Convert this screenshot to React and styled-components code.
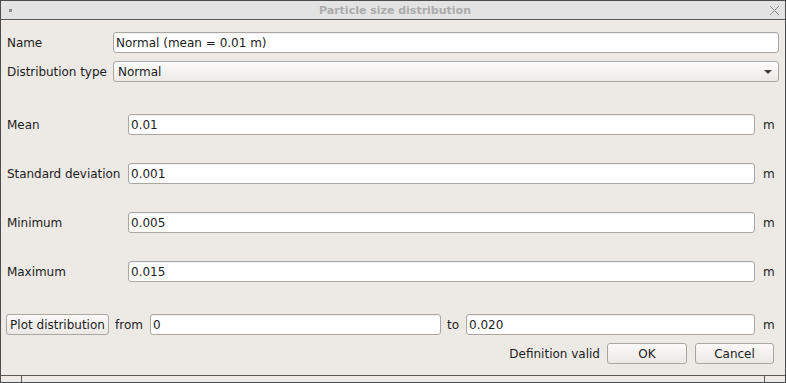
import React from "react";
import styled, { createGlobalStyle } from "styled-components";

const GlobalStyle = createGlobalStyle`
  html, body {
    margin: 0;
    padding: 0;
    background: #edeae6;
  }
  * {
    box-sizing: border-box;
  }
`;

const Dialog = styled.div`
  width: 786px;
  height: 383px;
  display: flex;
  flex-direction: column;
  border: 1px solid #4c4c4c;
  background: #edeae6;
  font-family: "DejaVu Sans", "Liberation Sans", sans-serif;
  font-size: 12px;
  color: #1c1c1c;
`;

const TitleBar = styled.div`
  height: 19px;
  flex: none;
  display: flex;
  align-items: center;
  position: relative;
  background: #e3e3e3;
  border-bottom: 1px solid #5a5a5a;
`;

const MenuDot = styled.span`
  position: absolute;
  left: 8px;
  top: 8px;
  width: 3px;
  height: 3px;
  background: #8c8c8c;
`;

const Title = styled.div`
  flex: 1;
  text-align: center;
  font-weight: bold;
  font-size: 11px;
  color: #ababab;
  padding-left: 4px;
`;

const CloseBtn = styled.svg`
  position: absolute;
  right: 5px;
  top: 4px;
`;

const Body = styled.div`
  flex: 1;
  display: flex;
  flex-direction: column;
  padding: 12px 6px 0 5px;
`;

const TopGrid = styled.div`
  display: grid;
  grid-template-columns: 107px 1fr;
  grid-auto-rows: 21px;
  row-gap: 8px;
`;

const ParamGrid = styled.div`
  display: grid;
  grid-template-columns: 122px 1fr 24px;
  grid-auto-rows: 21px;
  row-gap: 28px;
  margin-top: 32px;
`;

const Label = styled.span`
  display: flex;
  align-items: center;
  padding-left: 1px;
  white-space: nowrap;
  letter-spacing: -0.05px;
`;

const Unit = styled.span`
  display: flex;
  align-items: center;
  padding-left: 8px;
`;

const Connector = styled.span`
  width: ${(p) => p.$w}px;
  flex: none;
  padding-left: 6px;
`;

const Field = styled.input`
  height: 21px;
  width: ${(p) => (p.$w ? p.$w + "px" : "100%")};
  flex: ${(p) => (p.$w ? "none" : "1")};
  min-width: 0;
  border: 1px solid #aaa7a2;
  border-radius: 3px;
  background: #ffffff;
  box-shadow: inset 0 1px 1px rgba(0, 0, 0, 0.06);
  padding: 0 2px;
  font: inherit;
  color: #1c1c1c;
  outline: none;
`;

const Combo = styled.div`
  height: 21px;
  display: flex;
  align-items: center;
  justify-content: space-between;
  border: 1px solid #aaa7a2;
  border-radius: 3px;
  background: linear-gradient(#fdfdfd, #ece9e5);
  padding: 0 6px 0 4px;
`;

const Arrow = styled.span`
  width: 0;
  height: 0;
  border-left: 4px solid transparent;
  border-right: 4px solid transparent;
  border-top: 4px solid #3e3e3e;
`;

const PlotRow = styled.div`
  display: flex;
  align-items: center;
  height: 21px;
  margin-top: 32px;
`;

const Button = styled.button`
  height: 21px;
  width: ${(p) => p.$w}px;
  flex: none;
  border: 1px solid #aaa7a2;
  border-radius: 3px;
  background: linear-gradient(#fbfaf9, #ebe8e4);
  font: inherit;
  color: #1c1c1c;
  padding: 0;
`;

const Footer = styled.div`
  display: flex;
  align-items: center;
  justify-content: flex-end;
  height: 21px;
  margin-top: 8px;
  padding-right: 5px;
  gap: 7px;
`;

const Buttons = styled.div`
  display: flex;
  gap: 8px;
`;

const StatusStrip = styled.div`
  height: 7px;
  flex: none;
  border-top: 1px solid #5a5a5a;
  display: grid;
  grid-template-columns: 20px 1fr 21px;
`;

const StripCell = styled.div`
  border-left: ${(p) => (p.$line ? "1px solid #5a5a5a" : "none")};
`;

const params = [
  ["Mean", "0.01"],
  ["Standard deviation", "0.001"],
  ["Minimum", "0.005"],
  ["Maximum", "0.015"],
];

const App = () => {
  return (
    <>
      <GlobalStyle />
      <Dialog>
        <TitleBar>
          <MenuDot />
          <Title>Particle size distribution</Title>
          <CloseBtn width="11" height="11" viewBox="0 0 11 11">
            <path d="M1 1 L10 10 M10 1 L1 10" stroke="#8a8a8a" strokeWidth="1" fill="none" />
          </CloseBtn>
        </TitleBar>

        <Body>
          <TopGrid>
            <Label>Name</Label>
            <Field defaultValue="Normal (mean = 0.01 m)" />
            <Label>Distribution type</Label>
            <Combo>
              <span>Normal</span>
              <Arrow />
            </Combo>
          </TopGrid>

          <ParamGrid>
            {params.map(([name, val]) => (
              <React.Fragment key={name}>
                <Label>{name}</Label>
                <Field defaultValue={val} />
                <Unit>m</Unit>
              </React.Fragment>
            ))}
          </ParamGrid>

          <PlotRow>
            <Button $w={103}>Plot distribution</Button>
            <Connector $w={41}>from</Connector>
            <Field $w={291} defaultValue="0" />
            <Connector $w={25}>to</Connector>
            <Field defaultValue="0.020" />
            <Unit style={{ width: 24 }}>m</Unit>
          </PlotRow>

          <Footer>
            <span>Definition valid</span>
            <Buttons>
              <Button $w={80}>OK</Button>
              <Button $w={79}>Cancel</Button>
            </Buttons>
          </Footer>
        </Body>

        <StatusStrip>
          <StripCell />
          <StripCell $line />
          <StripCell $line />
        </StatusStrip>
      </Dialog>
    </>
  );
};

export default App;
